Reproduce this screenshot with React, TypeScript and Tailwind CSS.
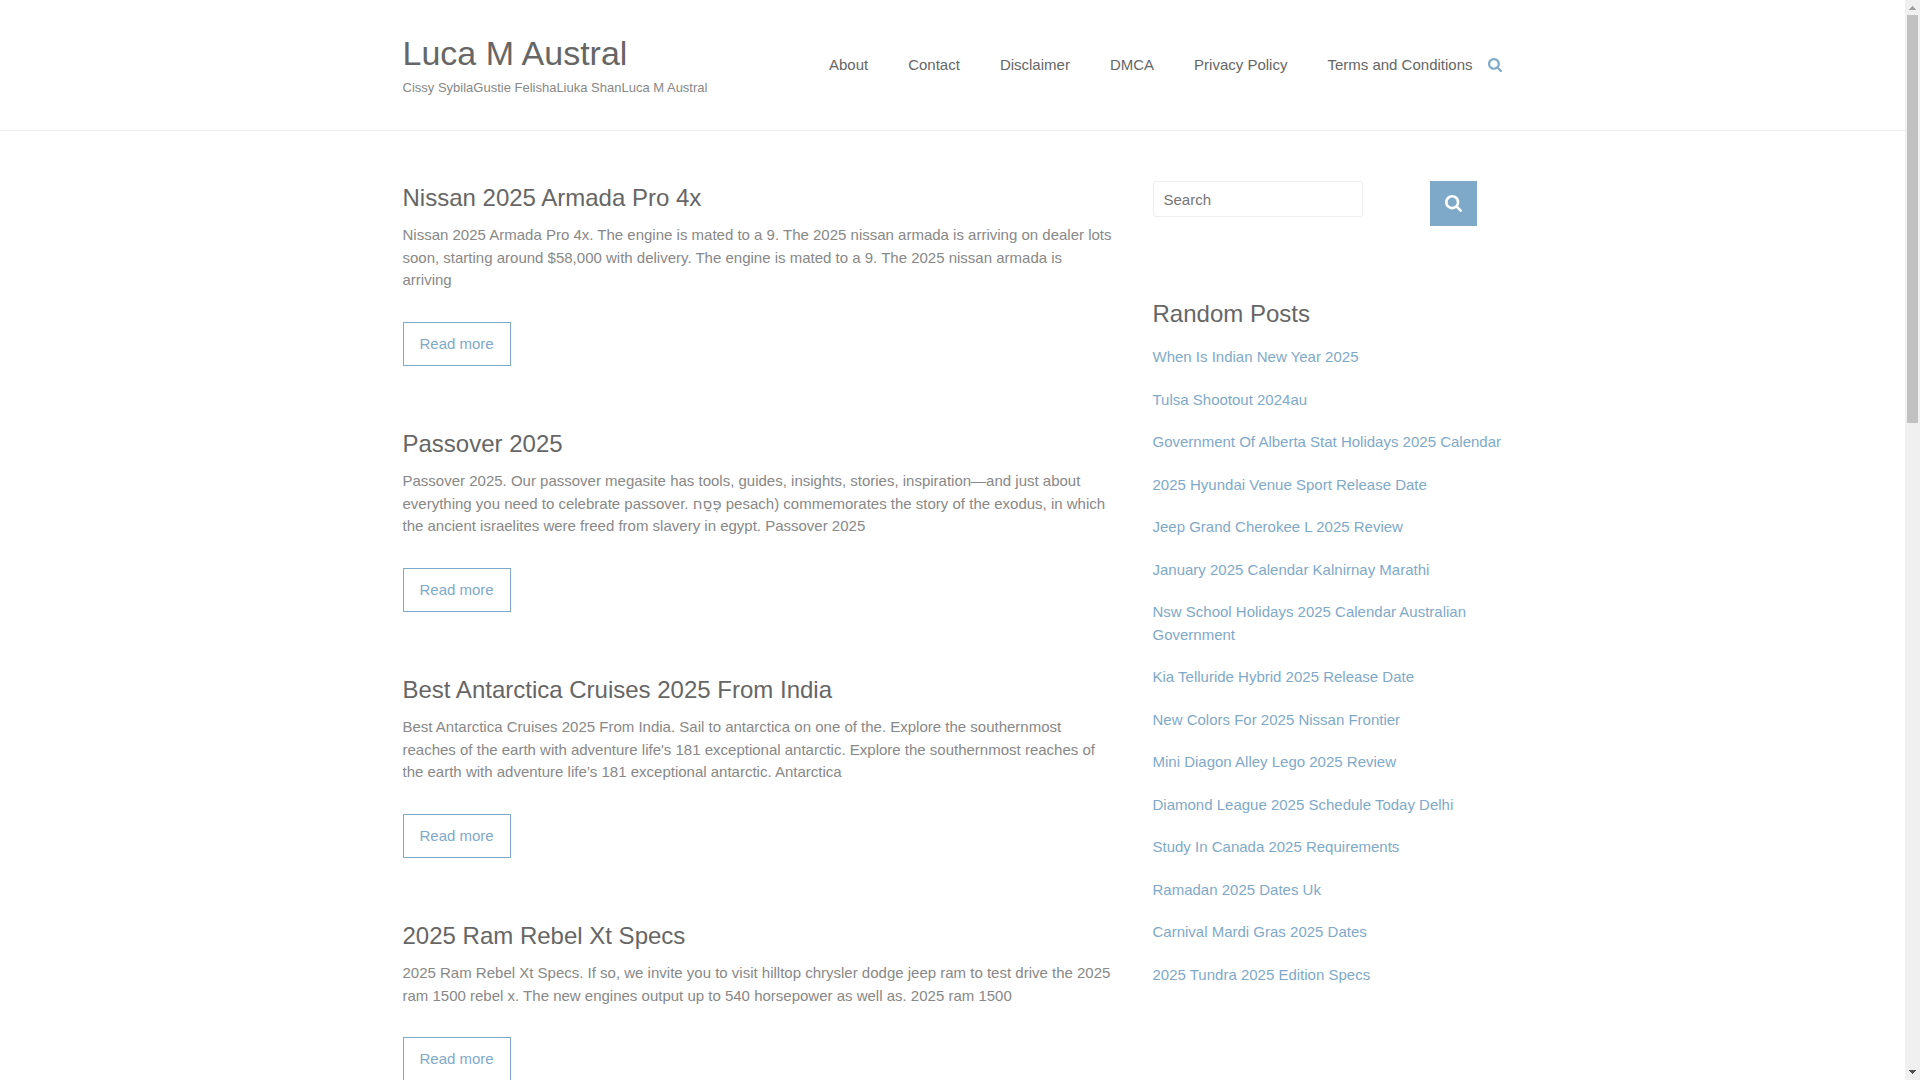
import { useState, type ReactNode } from "react";

interface Post {
  title: string;
  excerpt: ReactNode;
}

const NAV_LINKS = ["About", "Contact", "Disclaimer", "DMCA", "Privacy Policy", "Terms and Conditions"];

const POSTS: Post[] = [
  {
    title: "Nissan 2025 Armada Pro 4x",
    excerpt:
      "Nissan 2025 Armada Pro 4x. The engine is mated to a 9. The 2025 nissan armada is arriving on dealer lots soon, starting around $58,000 with delivery. The engine is mated to a 9. The 2025 nissan armada is arriving",
  },
  {
    title: "Passover 2025",
    excerpt: (
      <>
        Passover 2025. Our passover megasite has tools, guides, insights, stories, inspiration—and just about
        everything you need to celebrate passover.{" "}
        <span lang="he" className="font-['DejaVu_Sans',sans-serif] leading-none">
          פֶּסַח
        </span>{" "}
        pesach) commemorates the story of the exodus, in which the ancient israelites were freed from slavery in
        egypt. Passover 2025
      </>
    ),
  },
  {
    title: "Best Antarctica Cruises 2025 From India",
    excerpt:
      "Best Antarctica Cruises 2025 From India. Sail to antarctica on one of the. Explore the southernmost reaches of the earth with adventure life's 181 exceptional antarctic. Explore the southernmost reaches of the earth with adventure life’s 181 exceptional antarctic. Antarctica",
  },
  {
    title: "2025 Ram Rebel Xt Specs",
    excerpt:
      "2025 Ram Rebel Xt Specs. If so, we invite you to visit hilltop chrysler dodge jeep ram to test drive the 2025 ram 1500 rebel x. The new engines output up to 540 horsepower as well as. 2025 ram 1500",
  },
];

const RANDOM_POSTS = [
  "When Is Indian New Year 2025",
  "Tulsa Shootout 2024au",
  "Government Of Alberta Stat Holidays 2025 Calendar",
  "2025 Hyundai Venue Sport Release Date",
  "Jeep Grand Cherokee L 2025 Review",
  "January 2025 Calendar Kalnirnay Marathi",
  "Nsw School Holidays 2025 Calendar Australian Government",
  "Kia Telluride Hybrid 2025 Release Date",
  "New Colors For 2025 Nissan Frontier",
  "Mini Diagon Alley Lego 2025 Review",
  "Diamond League 2025 Schedule Today Delhi",
  "Study In Canada 2025 Requirements",
  "Ramadan 2025 Dates Uk",
  "Carnival Mardi Gras 2025 Dates",
  "2025 Tundra 2025 Edition Specs",
];

export default function App() {
  return (
    <div className="flex h-screen bg-white font-['Liberation_Sans',Arial,sans-serif] text-[15px] leading-normal text-[#888888]">
      <div className="min-w-0 flex-1 overflow-y-auto [scrollbar-width:none]">
        <Header />
        <div className="mx-auto flex max-w-[1100px] flex-col gap-10 pt-[50px] lg:flex-row">
          <main className="min-w-0 flex-1">
            {POSTS.map((post) => (
              <PostSummary key={post.title} post={post} />
            ))}
          </main>
          <Sidebar />
        </div>
      </div>
      <ScrollTrack />
    </div>
  );
}

function Header() {
  return (
    <header className="border-b border-[#eeeeee]">
      <div className="mx-auto flex min-h-[130px] max-w-[1100px] flex-wrap items-center justify-between">
        <div>
          <h1 className="text-[34px] leading-[42px] text-[#666666]">
            <a href="#">Luca M Austral</a>
          </h1>
          <p className="pt-1 text-[13px] leading-5">Cissy SybilaGustie FelishaLiuka ShanLuca M Austral</p>
        </div>
        <div className="flex items-center gap-[15px]">
          <nav className="flex flex-wrap gap-10 text-[#666666]">
            {NAV_LINKS.map((label) => (
              <a key={label} href="#" className="hover:text-[#7fa9c9]">
                {label}
              </a>
            ))}
          </nav>
          <button aria-label="Open search" className="w-[15px] text-[#7fa9c9]">
            <SearchIcon className="h-3.5 w-3.5" />
          </button>
        </div>
      </div>
    </header>
  );
}

function PostSummary({ post }: { post: Post }) {
  return (
    <article className="mb-[61px]">
      <h2 className="mb-[9px] text-2xl leading-[34px] text-[#666666]">
        <a href="#">{post.title}</a>
      </h2>
      <p className="mb-[30px]">{post.excerpt}</p>
      <a href="#" className="inline-block border border-[#7fa9c9] px-4 py-[10px] align-top text-[#7fa9c9]">
        Read more
      </a>
    </article>
  );
}

function Sidebar() {
  const [query, setQuery] = useState("");

  return (
    <aside className="w-full shrink-0 lg:w-[350px]">
      <form className="mb-[70px] flex items-start gap-[67px]" onSubmit={(e) => e.preventDefault()}>
        <input
          type="text"
          aria-label="Search"
          placeholder="Search"
          value={query}
          onChange={(e) => setQuery(e.target.value)}
          className="h-9 w-[210px] rounded-[3px] border border-[#eeeeee] px-[10px] text-[#666666] placeholder:text-[#757575]"
        />
        <button aria-label="Submit search" className="grid h-[45px] w-[47px] place-items-center bg-[#7fa9c9] text-white">
          <SearchIcon className="h-[17px] w-[17px]" />
        </button>
      </form>

      <h2 className="mb-[14px] text-2xl leading-9 text-[#666666]">Random Posts</h2>
      <ul className="flex flex-col gap-5">
        {RANDOM_POSTS.map((title) => (
          <li key={title}>
            <a href="#" className="text-[#7fa9c9]">
              {title}
            </a>
          </li>
        ))}
      </ul>
    </aside>
  );
}

function ScrollTrack() {
  return (
    <div aria-hidden="true" className="flex w-[15px] shrink-0 flex-col items-center bg-[#f0f0f0]">
      <svg viewBox="0 0 15 15" width="15" height="15" shapeRendering="crispEdges" className="shrink-0">
        <path d="M7 6h1v1h1v1h1v1h1v1H4V9h1V8h1V7h1z" fill="#a0a0a0" />
      </svg>
      <div className="h-[37.8%] w-[11px] bg-[#c1c1c1]" />
      <svg viewBox="0 0 15 15" width="15" height="15" shapeRendering="crispEdges" className="mt-auto shrink-0">
        <path d="M4 5h7v1h-1v1H9v1H8v1H7V8H6V7H5V6H4z" fill="#505050" />
      </svg>
    </div>
  );
}

function SearchIcon({ className }: { className?: string }) {
  return (
    <svg viewBox="0 128 1664 1664" fill="currentColor" className={className}>
      <path d="M1152 832q0-185-131.5-316.5T704 384 387.5 515.5 256 832t131.5 316.5T704 1280t316.5-131.5T1152 832zm512 832q0 52-38 90t-90 38q-54 0-90-38l-343-342q-179 124-399 124-143 0-273.5-55.5t-225-150-150-225T0 832t55.5-273.5 150-225 225-150T704 128t273.5 55.5 225 150 150 225T1408 832q0 220-124 399l343 343q37 37 37 90z" />
    </svg>
  );
}
